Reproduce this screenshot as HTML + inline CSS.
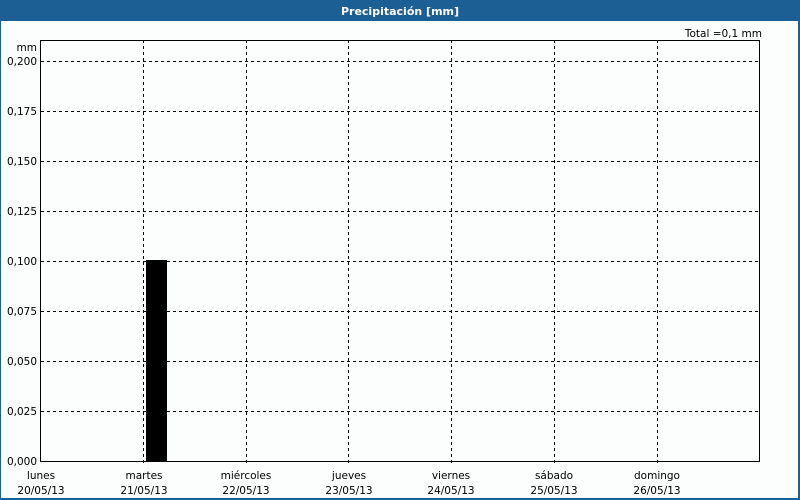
<!DOCTYPE html>
<html><head><style>
body{margin:0;width:800px;height:500px;overflow:hidden;background:#fff;font-family:"DejaVu Sans","Liberation Sans",sans-serif}
</style></head><body>
<svg width="800" height="500" xmlns="http://www.w3.org/2000/svg" style="display:block">
<rect x="0" y="0" width="800" height="500" fill="#1c5f95"/>
<rect x="1" y="21" width="797" height="477" fill="#fcfdfd"/>
<text x="400" y="15" fill="#fff" font-size="11" font-weight="bold" text-anchor="middle" font-family="DejaVu Sans,sans-serif">Precipitación [mm]</text>
<text x="762" y="37" font-size="10.5" text-anchor="end" fill="#000">Total =0,1 mm</text>
<text x="37" y="51" font-size="10.5" text-anchor="end" fill="#000">mm</text>
<g stroke="#000" stroke-width="1" stroke-dasharray="3,3" shape-rendering="crispEdges">
<line x1="41" y1="61.5" x2="760" y2="61.5"/>
<line x1="41" y1="111.5" x2="760" y2="111.5"/>
<line x1="41" y1="161.5" x2="760" y2="161.5"/>
<line x1="41" y1="211.5" x2="760" y2="211.5"/>
<line x1="41" y1="261.5" x2="760" y2="261.5"/>
<line x1="41" y1="311.5" x2="760" y2="311.5"/>
<line x1="41" y1="361.5" x2="760" y2="361.5"/>
<line x1="41" y1="411.5" x2="760" y2="411.5"/>
<line x1="143.5" y1="40" x2="143.5" y2="466"/>
<line x1="246.5" y1="40" x2="246.5" y2="466"/>
<line x1="348.5" y1="40" x2="348.5" y2="466"/>
<line x1="451.5" y1="40" x2="451.5" y2="466"/>
<line x1="554.5" y1="40" x2="554.5" y2="466"/>
<line x1="657.5" y1="40" x2="657.5" y2="466"/>
</g>
<rect x="146" y="260" width="21" height="201" fill="#000"/>
<rect x="40.5" y="40.5" width="719" height="421" fill="none" stroke="#000" stroke-width="1.2" shape-rendering="crispEdges"/>
<g font-size="10.5" fill="#000" text-anchor="end">
<text x="37" y="65">0,200</text>
<text x="37" y="115">0,175</text>
<text x="37" y="165">0,150</text>
<text x="37" y="215">0,125</text>
<text x="37" y="265">0,100</text>
<text x="37" y="315">0,075</text>
<text x="37" y="365">0,050</text>
<text x="37" y="415">0,025</text>
<text x="37" y="465">0,000</text>
</g>
<g font-size="10.5" fill="#000" text-anchor="middle">
<text x="41" y="479">lunes</text><text x="41" y="494">20/05/13</text>
<text x="144" y="479">martes</text><text x="144" y="494">21/05/13</text>
<text x="246" y="479">miércoles</text><text x="246" y="494">22/05/13</text>
<text x="349" y="479">jueves</text><text x="349" y="494">23/05/13</text>
<text x="451" y="479">viernes</text><text x="451" y="494">24/05/13</text>
<text x="554" y="479">sábado</text><text x="554" y="494">25/05/13</text>
<text x="657" y="479">domingo</text><text x="657" y="494">26/05/13</text>
</g>
</svg>
</body></html>
